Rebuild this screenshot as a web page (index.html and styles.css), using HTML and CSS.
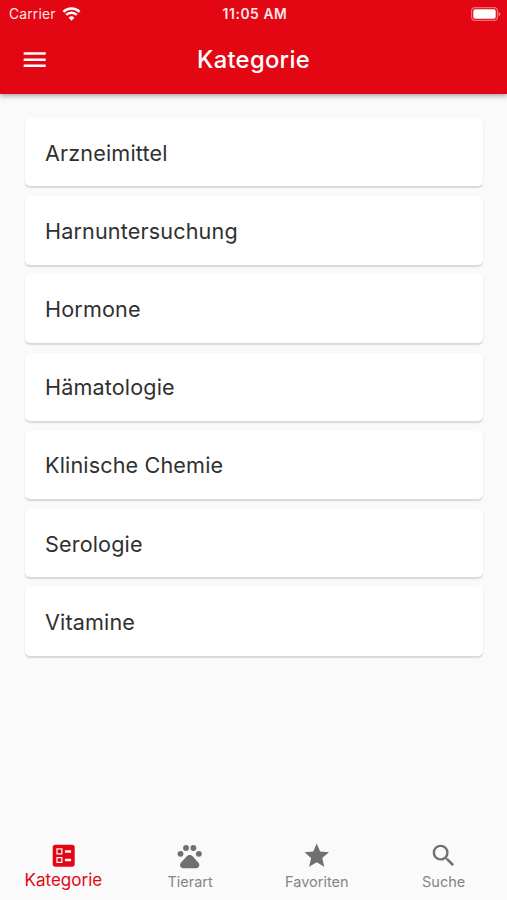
FILE: index.html
```html
<!DOCTYPE html>
<html lang="de">
<head>
<meta charset="utf-8">
<title>Kategorie</title>
<link rel="stylesheet" href="styles.css">
</head>
<body>
<div class="app">
  <header class="header">
    <div class="status">
      <div class="carrier">
        <span>Carrier</span>
        <svg class="wifi" viewBox="0 0 20 15">
          <path d="M1.3 5.2a12.6 12.6 0 0 1 17.4 0M4.3 8.5a8.2 8.2 0 0 1 11.4 0" fill="none" stroke="currentColor" stroke-width="2.7"/>
          <path d="M6.9 11.4a4.6 4.6 0 0 1 6.2 0L10 14.7z" fill="currentColor"/>
        </svg>
      </div>
      <span class="time">11:05 AM</span>
      <svg class="battery" viewBox="0 0 30 14">
        <rect x=".6" y=".6" width="25.8" height="12.8" rx="3.4" fill="none" stroke="#fff" stroke-opacity=".42" stroke-width="1.2"/>
        <rect x="2.3" y="2.3" width="22.4" height="9.4" rx="1.8" fill="#fff"/>
        <path d="M27.6 4.7c2.2.8 2.2 3.8 0 4.6z" fill="#fff" fill-opacity=".5"/>
      </svg>
    </div>
    <div class="toolbar">
      <svg class="icon menu" viewBox="0 0 24 24"><path d="M3 18h18v-2H3v2zm0-5h18v-2H3v2zm0-7v2h18V6H3z"/></svg>
      <h1 class="title">Kategorie</h1>
    </div>
  </header>
  <main class="list">
    <div class="card">Arzneimittel</div>
    <div class="card">Harnuntersuchung</div>
    <div class="card">Hormone</div>
    <div class="card">Hämatologie</div>
    <div class="card">Klinische Chemie</div>
    <div class="card">Serologie</div>
    <div class="card">Vitamine</div>
  </main>
  <nav class="tabs">
    <div class="tab active">
      <svg class="icon" viewBox="0 0 24 24"><path fill-rule="evenodd" d="M13 9.5h5v-2h-5v2zm0 7h5v-2h-5v2zm6 4.5H5c-1.1 0-2-.9-2-2V5c0-1.100.9-2 2-2h14c1.100 0 2 .9 2 2v14c0 1.100-.9 2-2 2zM6 11h5V6H6v5zm1-4h3v3H7V7zM6 18h5v-5H6v5zm1-4h3v3H7v-3z"/></svg>
      <span>Kategorie</span>
    </div>
    <div class="tab">
      <svg class="icon" viewBox="0 0 24 24"><circle cx="4.500" cy="10.500" r="2.400"/><circle cx="9" cy="5.700" r="2.400"/><circle cx="15" cy="5.700" r="2.400"/><circle cx="19.500" cy="10.500" r="2.400"/><path d="M12 11.400c-1.100 0-1.900.5-2.600 1.300L5 17.600c-.7.800-1 1.700-.8 2.700.3 1.200 1.200 1.900 2.500 1.900h10.600c1.300 0 2.200-.7 2.500-1.900.2-1-.1-1.900-.8-2.700l-4.400-4.900c-.7-.8-1.500-1.300-2.600-1.300z"/></svg>
      <span>Tierart</span>
    </div>
    <div class="tab">
      <svg class="icon" viewBox="0 0 24 24"><path d="M12 17.270 18.180 21l-1.640-7.030L22 9.240l-7.190-.61L12 2 9.190 8.630 2 9.240l5.460 4.730L5.820 21z"/></svg>
      <span>Favoriten</span>
    </div>
    <div class="tab">
      <svg class="icon" viewBox="0 0 24 24"><path d="M15.500 14h-.79l-.28-.27A6.471 6.471 0 0 0 16 9.500 6.500 6.500 0 1 0 9.500 16c1.610 0 3.090-.59 4.230-1.570l.27.280v.79l5 4.990L20.490 19l-4.990-5zm-6 0C7.010 14 5 11.990 5 9.500S7.010 5 9.500 5 14 7.010 14 9.500 11.990 14 9.500 14z"/></svg>
      <span>Suche</span>
    </div>
  </nav>
</div>
</body>
</html>
```
FILE: styles.css
```css
* { box-sizing: border-box; }
body {
  margin: 0;
  background: #fafafa;
  font-family: Inter, "Liberation Sans", sans-serif;
}
.app {
  display: flex;
  flex-direction: column;
  height: 900px;
  overflow: hidden;
}
.header {
  height: 94px;
  flex: none;
  background: #e30613;
  color: #fff;
  box-shadow: 0 2px 5px rgba(0, 0, 0, .34);
}
.status {
  display: grid;
  grid-template-columns: 1fr auto 1fr;
  align-items: center;
  height: 25px;
  padding: 2px 6px 0 9px;
}
.carrier {
  display: flex;
  align-items: center;
  gap: 6px;
  font-size: 13.8px;
  letter-spacing: .2px;
  color: #ffe6e7;
}
.wifi { width: 19px; height: 14px; color: #fff; }
.time {
  font-size: 13.8px;
  font-weight: 600;
  letter-spacing: .6px;
  color: #ffe6e7;
}
.battery { width: 30px; height: 14px; justify-self: end; }
.icon { width: 29.4px; height: 29.4px; fill: currentColor; }
.toolbar {
  display: grid;
  grid-template-columns: 60px 1fr 60px;
  align-items: center;
  height: 70px;
}
.menu { margin-left: 20px; }
.title {
  margin: 0;
  text-align: center;
  font-size: 23.8px;
  line-height: 30px;
  font-weight: 500;
  letter-spacing: .3px;
}
.list {
  flex: 1;
  display: flex;
  flex-direction: column;
  gap: 9.8px;
  padding: 24px 24.5px 0;
}
.card {
  display: flex;
  align-items: center;
  height: 68.4px;
  flex: none;
  padding: .8px 20.5px 0;
  border-radius: 5px;
  background: #fff;
  box-shadow: 0 1.5px 1.5px rgba(0, 0, 0, .13), 0 1px 4px rgba(0, 0, 0, .02);
  color: #303030;
  font-size: 21.6px;
  letter-spacing: .14px;
}
.tabs {
  display: flex;
  flex: none;
  height: 73px;
  background: #fafafa;
  box-shadow: 0 -1px 3px rgba(0, 0, 0, .015);
}
.tab {
  flex: 1;
  display: flex;
  flex-direction: column;
  align-items: center;
  padding-top: 14px;
  color: #707070;
  font-size: 14.5px;
  line-height: 23px;
}
.tab span { color: #858585; }
.tab.active { font-size: 17px; line-height: 21px; color: #e30613; }
.tab.active span { color: inherit; }
```
